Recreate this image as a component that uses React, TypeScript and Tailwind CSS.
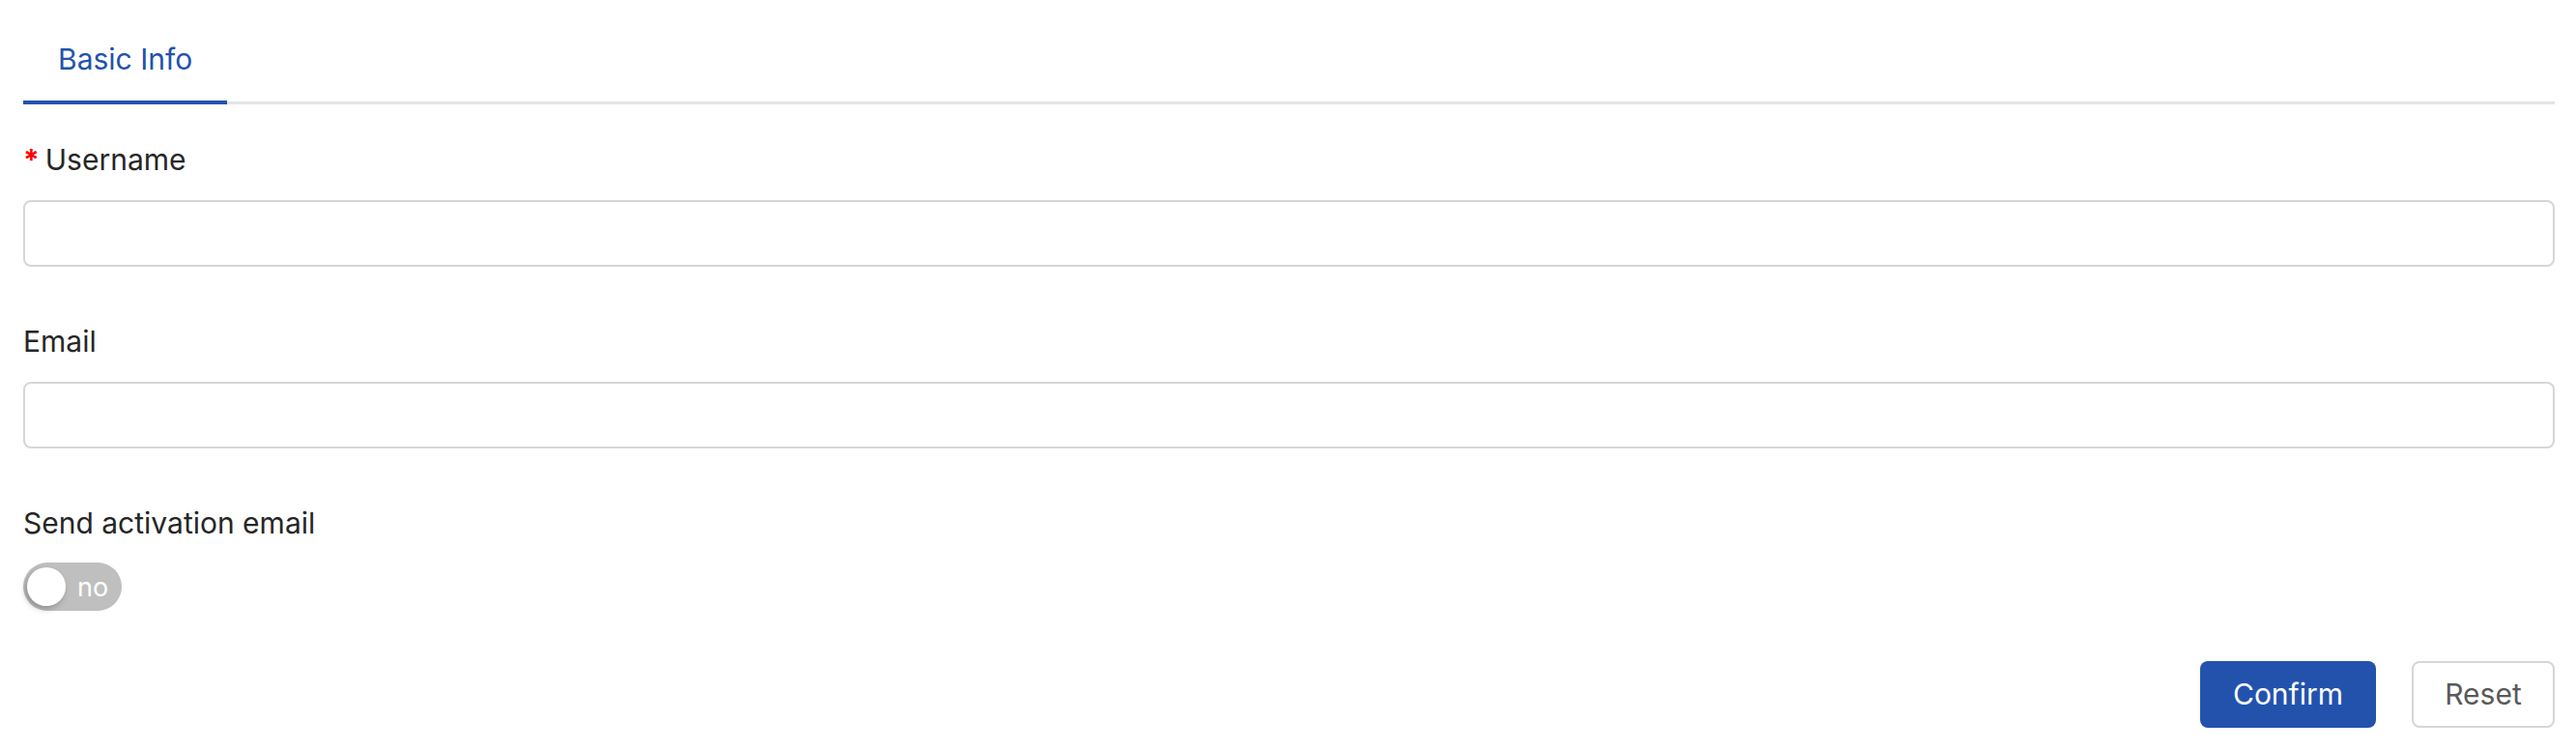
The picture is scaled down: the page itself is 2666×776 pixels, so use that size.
import { useState } from 'react';

const Field = ({ label, required }: { label: string; required?: boolean }) => {
  const [value, setValue] = useState('');
  return (
    <div className="flex flex-col">
      <label className="text-[30px] leading-[45px] text-[#262626]">
        {required && <span className="mr-[6px] font-bold text-[#ff0000]">*</span>}
        {label}
      </label>
      <input
        value={value}
        onChange={(e) => setValue(e.target.value)}
        className="mt-[19px] h-[69px] w-full rounded-[8px] border-2 border-[#d6d6d6] bg-white px-5 text-[30px] outline-none"
      />
    </div>
  );
};

export default function App() {
  const [sendEmail, setSendEmail] = useState(false);

  return (
    <div className="min-h-screen bg-white pl-6 pr-[22px] font-['Inter',sans-serif]">
      <div className="flex border-b-[3px] border-[#e4e4e4]">
        <button className="-mb-[3px] border-b-4 border-[#2352ad] px-9 pt-[41px] pb-[23px] text-[30px] leading-[40px] text-[#2352ad]">
          Basic Info
        </button>
      </div>

      <div className="mt-[35px] flex flex-col gap-[55px]">
        <Field label="Username" required />
        <Field label="Email" />
        <div className="flex flex-col">
          <label className="text-[30px] leading-[45px] text-[#262626]">Send activation email</label>
          <button
            onClick={() => setSendEmail(!sendEmail)}
            className="mt-[18px] flex h-[50px] w-[102px] items-center rounded-full bg-[#bfbfbf] pl-[4px]"
          >
            <span className="h-[40px] w-[40px] rounded-full bg-white shadow-[-2px_3px_6px_rgba(0,0,0,0.25)]" />
            <span className="ml-[12px] text-[27px] leading-none text-white">{sendEmail ? 'yes' : 'no'}</span>
          </button>
        </div>
      </div>

      <div className="mt-[52px] flex justify-end gap-[37px]">
        <button className="h-[69px] w-[182px] rounded-[8px] bg-[#2352ad] text-[30px] text-white">Confirm</button>
        <button className="h-[69px] w-[148px] rounded-[8px] border-2 border-[#d6d6d6] bg-white text-[30px] text-[#595959]">
          Reset
        </button>
      </div>
    </div>
  );
}
